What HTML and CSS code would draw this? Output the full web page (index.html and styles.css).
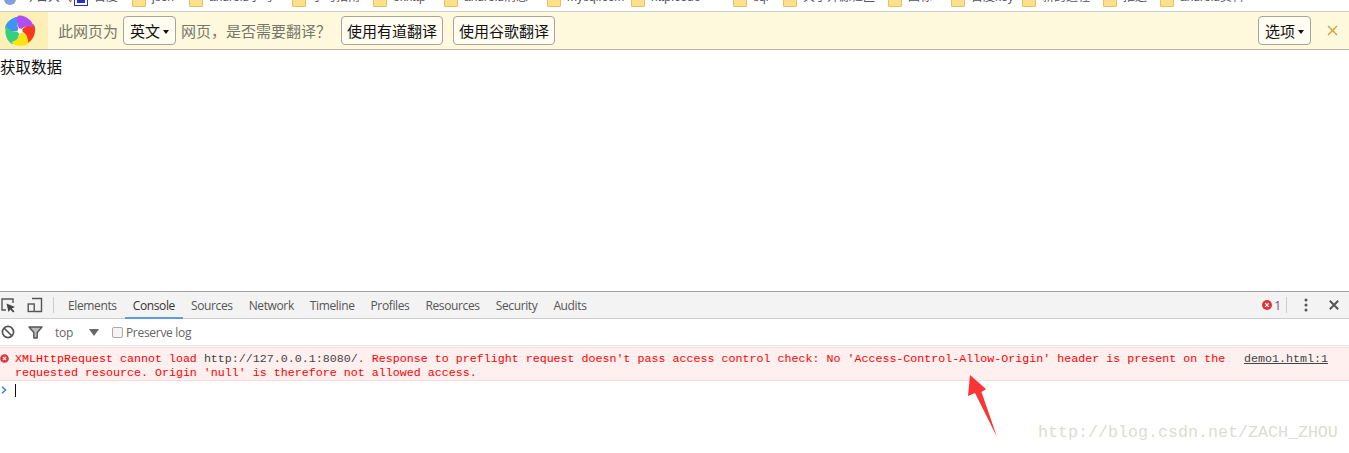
FILE: index.html
```html
<!DOCTYPE html>
<html lang="zh-CN">
<head>
<meta charset="utf-8">
<title>获取数据</title>
<link rel="stylesheet" href="styles.css">
</head>
<body>
<div class="page">
  <nav class="bookmarks">
    <span class="bm bm-first"><svg class="globe" viewBox="0 0 14 14"><circle cx="7" cy="7" r="6" fill="#7f9fe0"/></svg><span class="bm-text">今日天气</span></span>
    <span class="bm bm-baidu"><svg class="fav" viewBox="0 0 14 14"><rect x="0.5" y="0.5" width="13" height="13" fill="#fff" stroke="#2a2ae0"/><rect x="3" y="3" width="8" height="8" fill="#2432c8"/></svg><span class="bm-text">百度</span></span>
    <span class="bm"><i class="folder"></i><span class="bm-text t1">json</span></span>
    <span class="bm"><i class="folder"></i><span class="bm-text t2">android学习</span></span>
    <span class="bm"><i class="folder"></i><span class="bm-text t3">学习指南</span></span>
    <span class="bm"><i class="folder"></i><span class="bm-text t4">okhttp</span></span>
    <span class="bm"><i class="folder"></i><span class="bm-text t5">android消息</span></span>
    <span class="bm"><i class="folder"></i><span class="bm-text t6">mysql.com</span></span>
    <span class="bm"><i class="folder"></i><span class="bm-text t7">http.code</span></span>
    <span class="bm"><i class="folder"></i><span class="bm-text t8">sql</span></span>
    <span class="bm"><i class="folder"></i><span class="bm-text t9">关于开源社区</span></span>
    <span class="bm"><i class="folder"></i><span class="bm-text t10">图标</span></span>
    <span class="bm"><i class="folder"></i><span class="bm-text t11">百度key</span></span>
    <span class="bm"><i class="folder"></i><span class="bm-text t12">新的进程</span></span>
    <span class="bm"><i class="folder"></i><span class="bm-text t13">推送</span></span>
    <span class="bm"><i class="folder"></i><span class="bm-text">android资料</span></span>
  </nav>

  <div class="infobar">
    <div class="logo">
      <svg class="pinwheel" viewBox="-18 -18 36 36">
        <path fill="#3f93f5" transform="rotate(288)" d="M0-1C-3-6-4-13-2-15C3-17 13-11 13.5-4C9-6 4-5 0-1Z"/>
        <path fill="#36cf80" transform="rotate(216)" d="M0-1C-3-6-4-13-2-15C3-17 13-11 13.5-4C9-6 4-5 0-1Z"/>
        <path fill="#fbe312" transform="rotate(144)" d="M0-1C-3-6-4-13-2-15C3-17 13-11 13.5-4C9-6 4-5 0-1Z"/>
        <path fill="#f63a20" transform="rotate(72)" d="M0-1C-3-6-4-13-2-15C3-17 13-11 13.5-4C9-6 4-5 0-1Z"/>
        <path fill="#b14df2" d="M0-1C-3-6-4-13-2-15C3-17 13-11 13.5-4C9-6 4-5 0-1Z"/>
        <circle r="2.5" fill="#fff"/>
      </svg>
    </div>
    <span class="info-text">此网页为</span>
    <button class="ib-btn lang">英文<i class="caret"></i></button>
    <span class="info-text">网页，是否需要翻译？</span>
    <button class="ib-btn action">使用有道翻译</button>
    <button class="ib-btn action">使用谷歌翻译</button>
    <span class="spacer"></span>
    <button class="ib-btn options">选项<i class="caret"></i></button>
    <svg class="close-x" viewBox="0 0 11 11"><path d="M1 1L10 10M10 1L1 10" stroke="#d0a030" stroke-width="1.3" fill="none"/></svg>
  </div>

  <main class="content">获取数据</main>

  <section class="devtools">
    <div class="dt-tabs">
      <svg class="dt-inspect" viewBox="0 0 16 16"><path d="M6 13H2V2H13V6" fill="none" stroke="#555" stroke-width="1.4"/><path d="M6.5 6.5L15 10L11.8 11.5L14.5 14.5L13 15.5L10.5 12.5L8.5 15Z" fill="#444"/></svg>
      <svg class="dt-device" viewBox="0 0 16 16"><path d="M5 1.5H14.5V14.5H8" fill="none" stroke="#555" stroke-width="1.4"/><rect x="1.2" y="7" width="6" height="7.5" fill="none" stroke="#555" stroke-width="1.4"/></svg>
      <i class="dt-divider"></i>
      <a class="tab">Elements</a>
      <a class="tab active">Console</a>
      <a class="tab">Sources</a>
      <a class="tab">Network</a>
      <a class="tab">Timeline</a>
      <a class="tab">Profiles</a>
      <a class="tab">Resources</a>
      <a class="tab">Security</a>
      <a class="tab">Audits</a>
      <span class="spacer"></span>
      <svg class="err-icon" viewBox="0 0 10 10"><circle cx="5" cy="5" r="5" fill="#e0343c"/><path d="M3.2 3.2L6.8 6.8M6.8 3.2L3.2 6.8" stroke="#fff" stroke-width="1.2"/></svg>
      <span class="err-count">1</span>
      <i class="dt-divider right"></i>
      <svg class="dots" viewBox="0 0 4 14"><circle cx="2" cy="2" r="1.5" fill="#555"/><circle cx="2" cy="7" r="1.5" fill="#555"/><circle cx="2" cy="12" r="1.5" fill="#555"/></svg>
      <svg class="dt-close" viewBox="0 0 10 10"><path d="M.8.8L9.2 9.2M9.2.8L.8 9.2" stroke="#555" stroke-width="2"/></svg>
    </div>
    <div class="dt-filter">
      <svg class="ban" viewBox="0 0 14 14"><circle cx="7" cy="7" r="5.6" fill="none" stroke="#555" stroke-width="1.7"/><path d="M3 3L11 11" stroke="#555" stroke-width="1.7"/></svg>
      <svg class="funnel" viewBox="0 0 15 13"><path d="M1 1H14L9.2 6.5V12H5.8V6.5Z" fill="#bbb" stroke="#555" stroke-width="1.4" stroke-linejoin="round"/></svg>
      <span class="ctx">top</span>
      <i class="ctx-arrow"></i>
      <i class="check"></i>
      <span class="ctx">Preserve log</span>
    </div>
    <div class="msg">
      <svg class="msg-err" viewBox="0 0 10 10"><circle cx="5" cy="5" r="4.8" fill="#e0343c"/><path d="M3.2 3.2L6.8 6.8M6.8 3.2L3.2 6.8" stroke="#fff" stroke-width="1.2"/></svg>
      <div class="msg-text"><span class="red">XMLHttpRequest cannot load </span><span class="url">http://127.0.0.1:8080/</span><span class="red">. Response to preflight request doesn't pass access control check: No 'Access-Control-Allow-Origin' header is present on the requested resource. Origin 'null' is therefore not allowed access.</span></div>
      <a class="src">demo1.html:1</a>
    </div>
    <div class="prompt">
      <svg class="chev" viewBox="0 0 6 8"><path d="M1 .8L4.5 4L1 7.2" fill="none" stroke="#3b82e8" stroke-width="1.5"/></svg>
      <i class="cursor"></i>
    </div>
  </section>

  <svg class="arrow" viewBox="0 0 30 63"><path fill="#f93535" d="M2 0L18 14L13.500 17L29 62L7 18L0 21Z"/></svg>
  <div class="watermark">http://blog.csdn.net/ZACH_ZHOU</div>
</div>
</body>
</html>
```
FILE: styles.css
```css
* { box-sizing: border-box; }
html, body { margin: 0; padding: 0; background: #fff; }
body { font-family: "Liberation Sans", "Noto Sans CJK SC", sans-serif; }
.page {
  position: relative;
  width: 1349px;
  height: 453px;
  overflow: hidden;
  display: flex;
  flex-direction: column;
}
.spacer { flex: 1; }

/* bookmarks, clipped by the top edge */
.bookmarks {
  flex: none;
  height: 12px;
  border-bottom: 1px solid #cfcfc9;
  display: flex;
  align-items: flex-end;
  padding: 0 0 7px 0;
  overflow: hidden;
  font-size: 12px;
  color: #555;
  line-height: 14px;
}
.bm { display: flex; align-items: flex-end; flex: none; gap: 6px; margin-right: 14px; }
.bm-first { width: 74px; margin-right: 0; gap: 7px; padding-left: 3px; }
.bm-baidu { width: 58px; margin-right: 0; }
.globe, .fav { width: 14px; height: 14px; flex: none; margin-bottom: -2px; }
.bm-text { white-space: nowrap; }
.t1 { width: 23px; }
.t2 { width: 69px; }
.t3 { width: 47px; }
.t4 { width: 37px; }
.t5 { width: 69px; }
.t6 { width: 50px; }
.t7 { width: 68px; }
.t8 { width: 16px; }
.t9 { width: 71px; }
.t10 { width: 29px; }
.t11 { width: 37px; }
.t12 { width: 47px; }
.t13 { width: 23px; }
.folder {
  display: block;
  width: 14px;
  height: 12px;
  margin-bottom: -3px;
  background: #fde08a;
  border: 1px solid #e4c06a;
  border-radius: 1px;
  flex: none;
}

/* translate infobar */
.infobar {
  flex: none;
  height: 38px;
  background: #fef9dd;
  border-bottom: 1px solid #b8b8b0;
  display: flex;
  align-items: center;
  padding-right: 11px;
  font-size: 15px;
  font-family: "Noto Sans CJK SC", sans-serif;
}
.logo {
  align-self: stretch;
  width: 48px;
  margin-right: 10px;
  background: #fdf0b6;
  display: flex;
  align-items: center;
  justify-content: center;
  flex: none;
}
.pinwheel { width: 36px; height: 36px; margin-left: -8px; }
.info-text { color: #77776a; white-space: nowrap; }
.ib-btn {
  height: 29px;
  padding: 0;
  margin: 0;
  font: inherit;
  color: #111;
  background: #fffdf2;
  border: 1px solid #a8a498;
  border-radius: 4px;
  display: flex;
  align-items: center;
  justify-content: center;
  white-space: nowrap;
}
.lang { width: 53px; margin: 0 5px; }
.action { width: 102px; margin-left: 10px; }
.options { width: 53px; margin-right: 16px; }
.caret {
  width: 0;
  height: 0;
  margin-left: 3px;
  margin-top: 2px;
  border-left: 3.5px solid transparent;
  border-right: 3.5px solid transparent;
  border-top: 4px solid #111;
}
.close-x { width: 11px; height: 11px; flex: none; }

.content {
  flex: 1;
  font-size: 15.5px;
  line-height: 33px;
  font-family: "Noto Sans CJK SC", sans-serif;
  color: #111;
}

/* devtools */
.devtools { flex: none; height: 162px; display: flex; flex-direction: column; }
.dt-tabs {
  flex: none;
  height: 28px;
  background: #f3f3f3;
  border-top: 1px solid #a3a3a3;
  border-bottom: 1px solid #cdcdcd;
  display: flex;
  align-items: center;
  font-family: "Open Sans", sans-serif;
  font-size: 12px;
  color: #555;
}
.dt-inspect { width: 16px; height: 16px; flex: none; }
.dt-device { width: 16px; height: 16px; margin-left: 11px; flex: none; }
.dt-divider { width: 1px; height: 16px; background: #ccc; margin-left: 10px; margin-right: 6px; flex: none; }
.tab {
  align-self: stretch;
  display: flex;
  align-items: center;
  padding: 1px 8px 0;
  margin-bottom: -1px;
  border-bottom: 2px solid transparent;
  white-space: nowrap;
  letter-spacing: -0.37px;
}
.tab.active { color: #333; border-bottom-color: #5b9be8; }
.err-icon { width: 10px; height: 10px; flex: none; }
.err-count { margin-left: 2px; color: #7a4a9a; font-size: 12px; }
.dt-divider.right { margin: 0 0 0 5px; }
.dots { width: 4px; height: 14px; margin-left: 17px; flex: none; }
.dt-close { width: 10px; height: 10px; margin-left: 21px; margin-right: 10px; flex: none; }

.dt-filter {
  flex: none;
  height: 27px;
  display: flex;
  align-items: center;
  border-bottom: 1px solid #e4e4e4;
  font-family: "Open Sans", sans-serif;
  font-size: 12px;
  color: #666;
}
.ban { width: 14px; height: 14px; margin-left: 1px; flex: none; }
.funnel { width: 15px; height: 13px; margin-left: 13px; flex: none; }
.ctx { margin-left: 12px; letter-spacing: -0.3px; white-space: nowrap; }
.ctx-arrow {
  width: 0;
  height: 0;
  margin-left: 16px;
  border-left: 5px solid transparent;
  border-right: 5px solid transparent;
  border-top: 7px solid #666;
  flex: none;
}
.check {
  width: 11px;
  height: 11px;
  margin-left: 13px;
  margin-right: -9px;
  background: #f4f4f4;
  border: 1px solid #aaa;
  border-radius: 2px;
  flex: none;
}

.msg {
  flex: none;
  height: 34px;
  margin-top: 1px;
  padding: 4px 21px 0 0;
  background: #fff0f0;
  border-top: 1px solid #ffd8d8;
  border-bottom: 1px solid #ffd8d8;
  display: flex;
  align-items: flex-start;
  font-family: "Liberation Mono", monospace;
  font-size: 11.67px;
  line-height: 14px;
}
.msg-err { width: 9px; height: 9px; margin-top: 2px; flex: none; }
.msg-text { margin-left: 6px; width: 1218px; flex: none; }
.red { color: #f00; }
.url { color: #444; }
.src { color: #444; text-decoration: underline; margin-left: 11px; white-space: nowrap; }

.prompt { flex: none; display: flex; align-items: center; height: 18px; }
.chev { width: 6px; height: 8px; margin-left: 1px; flex: none; }
.cursor { width: 1px; height: 13px; background: #111; margin-left: 8px; flex: none; }

/* annotations laid over the screenshot */
.arrow { position: absolute; left: 968px; top: 375px; width: 30px; height: 63px; overflow: visible; }
.watermark {
  position: absolute;
  left: 1038px;
  top: 423px;
  font-family: "Liberation Mono", monospace;
  font-size: 16.67px;
  line-height: 20px;
  color: #dcdcd4;
  white-space: nowrap;
}
```
